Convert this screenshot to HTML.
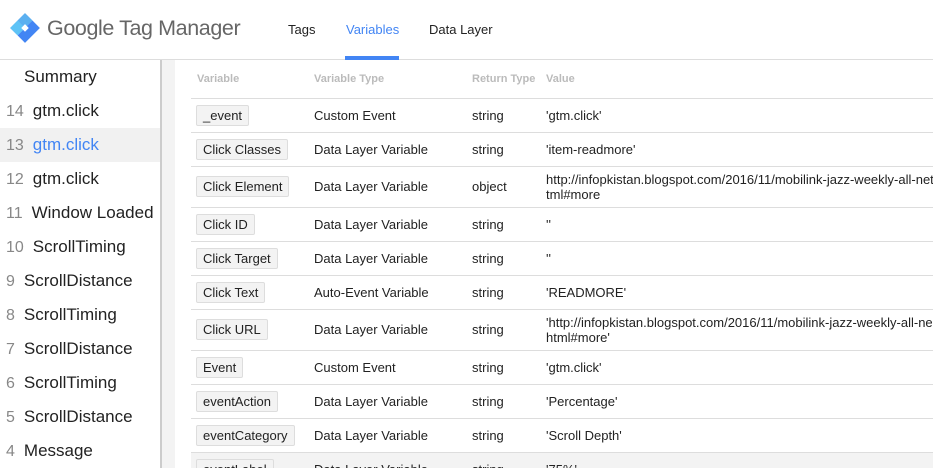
<!DOCTYPE html>
<html style="width:933px;height:468px;overflow:hidden"><head><meta charset="utf-8"><style>
*{margin:0;padding:0;box-sizing:border-box}
body{width:933px;height:468px;overflow:hidden;background:#fff;font-family:"Liberation Sans",Arial,sans-serif;position:relative;color:#222}
.hdr{position:absolute;left:0;top:0;width:933px;height:60px;border-bottom:1px solid #ddd;background:#fff}
.logo{position:absolute;left:8px;top:12px}
.brand{position:absolute;left:47px;top:16px;font-size:21.5px;color:#666;letter-spacing:-0.4px}
.tab{position:absolute;top:22px;font-size:13px;color:#222}
.ul{position:absolute;left:345px;top:56px;width:54px;height:4px;background:#4285f4}
.side{position:absolute;left:0;top:60px;width:160px;height:408px}
.si{position:absolute;left:0;width:160px;height:34px;font-size:17px;line-height:34px;white-space:nowrap}
.si b{font-weight:normal;color:#888;margin-right:9px;font-size:16px}
.sep{position:absolute;left:160px;top:60px;width:2px;height:408px;background:#ccc}
.strip{position:absolute;left:162px;top:60px;width:13px;height:408px;background:#f3f3f3}
.th{position:absolute;top:73px;font-size:11px;font-weight:bold;color:#bbb}
.row{position:absolute;left:191px;width:742px;border-top:1px solid #ddd;font-size:13px}
.row span{position:absolute;white-space:nowrap}
.chip{position:absolute;left:5px;background:#f3f3f3;border:1px solid #ddd;border-radius:2px;padding:2px 6px;font-size:13px;line-height:15px}
</style></head><body>
<div class="hdr">
<svg class="logo" width="34" height="34" viewBox="0 0 32 32">
<path d="M16 1 L23 8 L9 22 L2 15 Z" fill="#8ab4f8"/>
<path d="M16 1 L23 8 L16 15 L9 8Z" fill="#5bb0f0"/>
<path d="M23 8 L30 15 L16 29 L9 22 Z" fill="#4285f4"/>
<path d="M2 15 L9 8 L16 15 L9 22Z" fill="#5ec3f6"/>
<rect x="13.5" y="12.5" width="5" height="5" transform="rotate(45 16 15)" fill="#fff"/>
</svg>
<div class="brand">Google Tag Manager</div>
<div class="tab" style="left:288px">Tags</div>
<div class="tab" style="left:346px;color:#4285f4">Variables</div>
<div class="tab" style="left:429px">Data Layer</div>
<div class="ul"></div>
</div>
<div class="side">
<div class="si" style="top:0;padding-left:24px">Summary</div>
<div class="si" style="top:34px;padding-left:6px"><b>14</b>gtm.click</div>
<div class="si" style="top:68px;padding-left:6px;background:#f1f1f1;color:#4285f4"><b>13</b>gtm.click</div>
<div class="si" style="top:102px;padding-left:6px"><b>12</b>gtm.click</div>
<div class="si" style="top:136px;padding-left:6px"><b>11</b>Window Loaded</div>
<div class="si" style="top:170px;padding-left:6px"><b>10</b>ScrollTiming</div>
<div class="si" style="top:204px;padding-left:6px"><b>9</b>ScrollDistance</div>
<div class="si" style="top:238px;padding-left:6px"><b>8</b>ScrollTiming</div>
<div class="si" style="top:272px;padding-left:6px"><b>7</b>ScrollDistance</div>
<div class="si" style="top:306px;padding-left:6px"><b>6</b>ScrollTiming</div>
<div class="si" style="top:340px;padding-left:6px"><b>5</b>ScrollDistance</div>
<div class="si" style="top:374px;padding-left:6px"><b>4</b>Message</div>
</div>
<div class="sep"></div><div class="strip"></div>
<div class="th" style="left:197px">Variable</div>
<div class="th" style="left:314px">Variable Type</div>
<div class="th" style="left:472px">Return Type</div>
<div class="th" style="left:546px">Value</div>

<div class="row" style="top:98px;height:34px"><div class="chip" style="top:6px">_event</div><span style="left:123px;top:9px">Custom Event</span><span style="left:281px;top:9px">string</span><span style="left:355px;top:9px">'gtm.click'</span></div>
<div class="row" style="top:132px;height:34px"><div class="chip" style="top:6px">Click Classes</div><span style="left:123px;top:9px">Data Layer Variable</span><span style="left:281px;top:9px">string</span><span style="left:355px;top:9px">'item-readmore'</span></div>
<div class="row" style="top:166px;height:41px"><div class="chip" style="top:9px">Click Element</div><span style="left:123px;top:12px">Data Layer Variable</span><span style="left:281px;top:12px">object</span><span style="left:355px;top:5px;line-height:15px">http://infopkistan.blogspot.com/2016/11/mobilink-jazz-weekly-all-net<br>tml#more</span></div>
<div class="row" style="top:207px;height:34px"><div class="chip" style="top:6px">Click ID</div><span style="left:123px;top:9px">Data Layer Variable</span><span style="left:281px;top:9px">string</span><span style="left:355px;top:9px">''</span></div>
<div class="row" style="top:241px;height:34px"><div class="chip" style="top:6px">Click Target</div><span style="left:123px;top:9px">Data Layer Variable</span><span style="left:281px;top:9px">string</span><span style="left:355px;top:9px">''</span></div>
<div class="row" style="top:275px;height:34px"><div class="chip" style="top:6px">Click Text</div><span style="left:123px;top:9px">Auto-Event Variable</span><span style="left:281px;top:9px">string</span><span style="left:355px;top:9px">'READMORE'</span></div>
<div class="row" style="top:309px;height:41px"><div class="chip" style="top:9px">Click URL</div><span style="left:123px;top:12px">Data Layer Variable</span><span style="left:281px;top:12px">string</span><span style="left:355px;top:5px;line-height:15px">'http://infopkistan.blogspot.com/2016/11/mobilink-jazz-weekly-all-ne<br>html#more'</span></div>
<div class="row" style="top:350px;height:34px"><div class="chip" style="top:6px">Event</div><span style="left:123px;top:9px">Custom Event</span><span style="left:281px;top:9px">string</span><span style="left:355px;top:9px">'gtm.click'</span></div>
<div class="row" style="top:384px;height:34px"><div class="chip" style="top:6px">eventAction</div><span style="left:123px;top:9px">Data Layer Variable</span><span style="left:281px;top:9px">string</span><span style="left:355px;top:9px">'Percentage'</span></div>
<div class="row" style="top:418px;height:34px"><div class="chip" style="top:6px">eventCategory</div><span style="left:123px;top:9px">Data Layer Variable</span><span style="left:281px;top:9px">string</span><span style="left:355px;top:9px">'Scroll Depth'</span></div>
<div class="row" style="top:452px;height:16px;background:#f3f3f3;overflow:hidden"><div class="chip" style="top:6px">eventLabel</div><span style="left:123px;top:9px">Data Layer Variable</span><span style="left:281px;top:9px">string</span><span style="left:355px;top:9px">'75%'</span></div>
</body></html>
